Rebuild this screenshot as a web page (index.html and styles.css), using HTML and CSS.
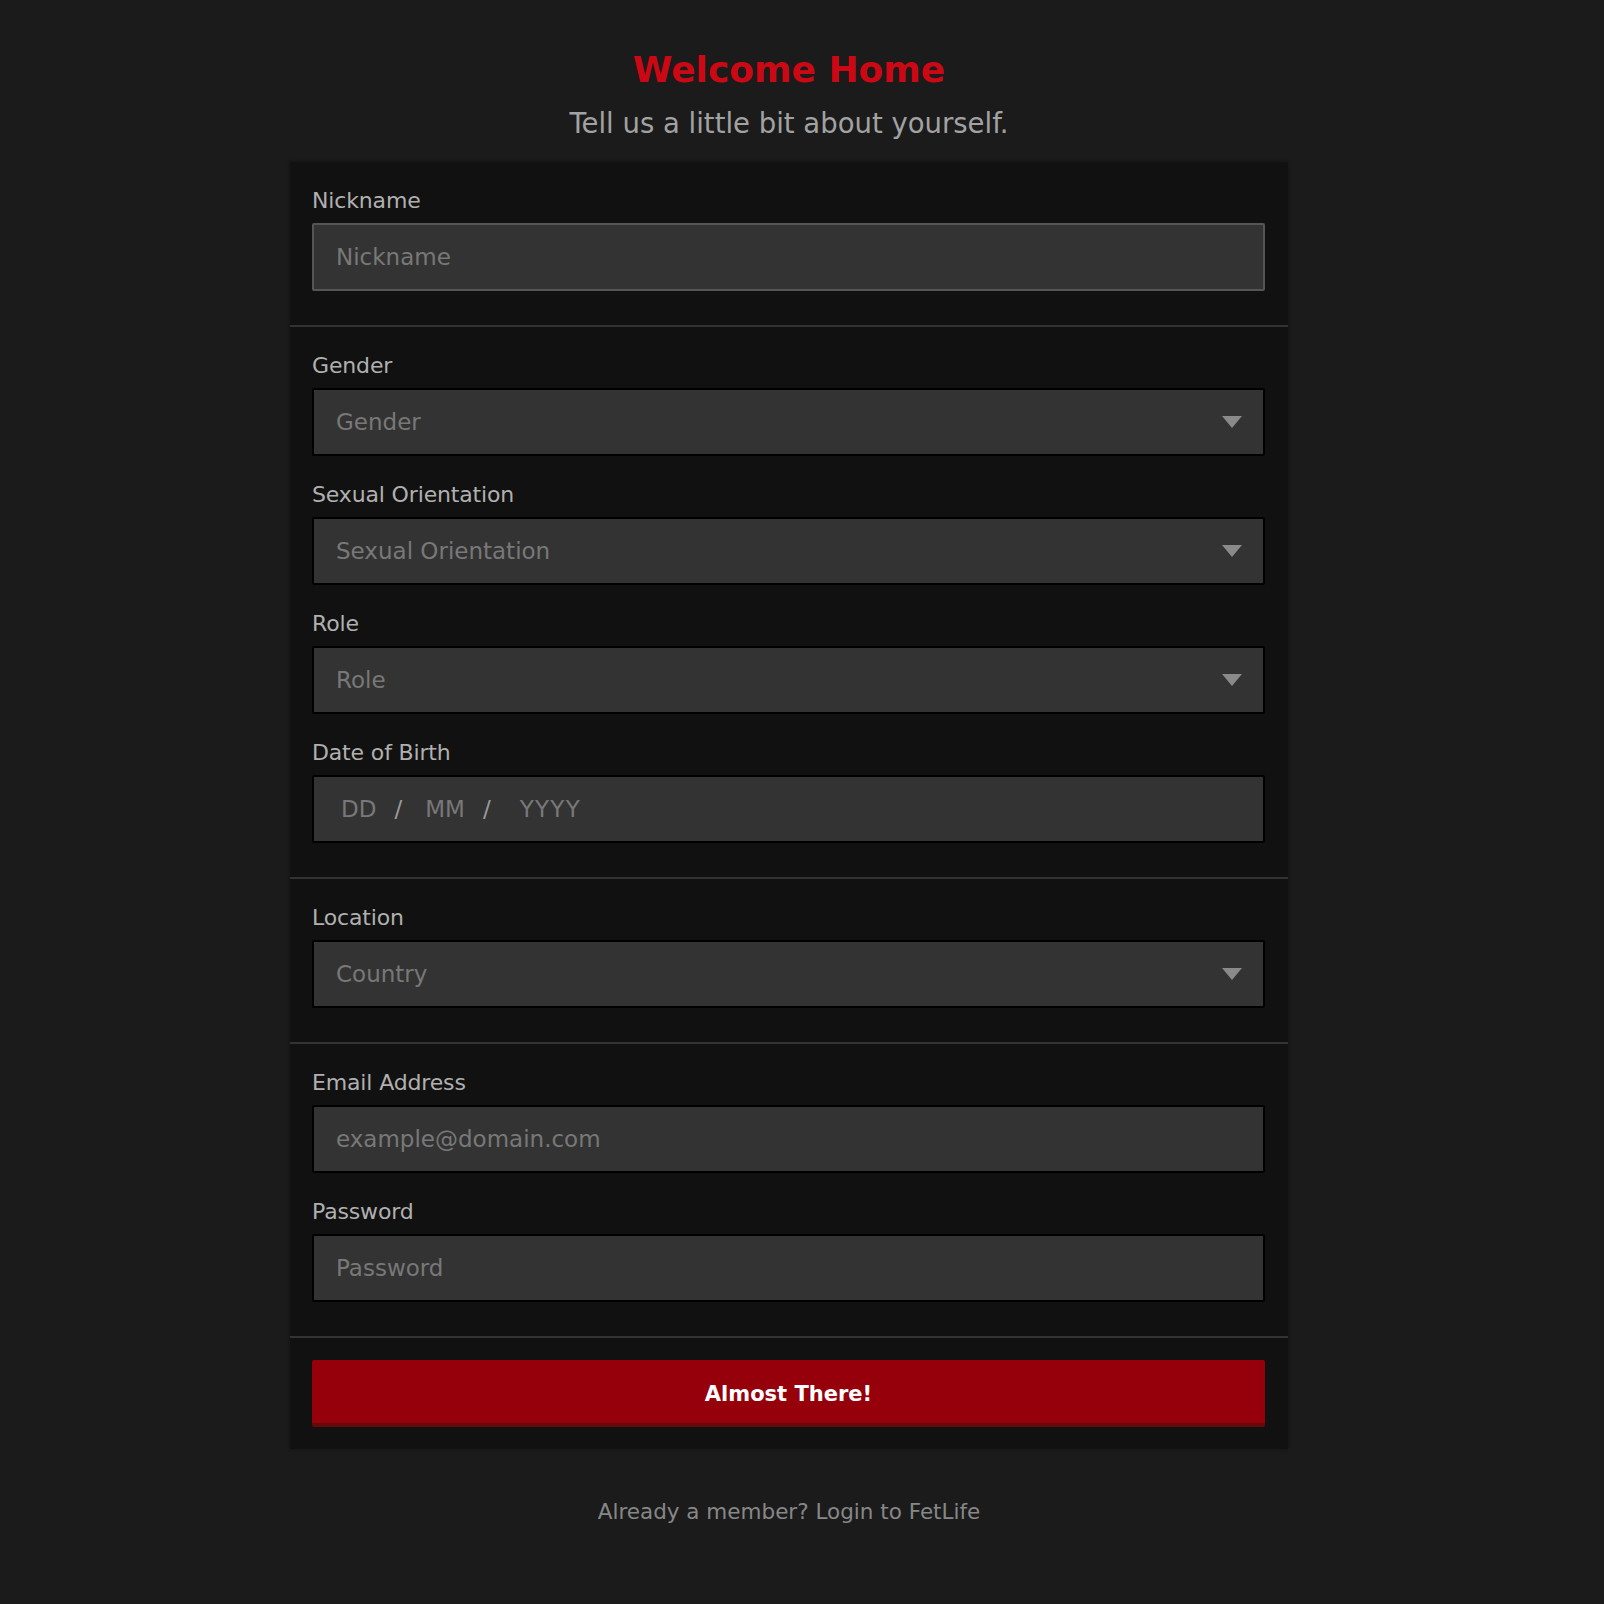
FILE: index.html
```html
<!DOCTYPE html>
<html lang="en">
<head>
<meta charset="utf-8">
<title>Welcome Home</title>
<link rel="stylesheet" href="styles.css">
</head>
<body>
<div class="page">
  <h1 class="title">Welcome Home</h1>
  <p class="subtitle">Tell us a little bit about yourself.</p>

  <form class="panel">
    <div class="section">
      <div class="field">
        <label class="label">Nickname</label>
        <input class="input input-active" type="text" placeholder="Nickname">
      </div>
    </div>

    <div class="section">
      <div class="field">
        <label class="label">Gender</label>
        <div class="input select"><span class="ph">Gender</span><svg class="caret" width="20" height="12" viewBox="0 0 20 12"><path d="M0 0H20L10 12Z" fill="#8a8a8a"/></svg></div>
      </div>
      <div class="field">
        <label class="label">Sexual Orientation</label>
        <div class="input select"><span class="ph">Sexual Orientation</span><svg class="caret" width="20" height="12" viewBox="0 0 20 12"><path d="M0 0H20L10 12Z" fill="#8a8a8a"/></svg></div>
      </div>
      <div class="field">
        <label class="label">Role</label>
        <div class="input select"><span class="ph">Role</span><svg class="caret" width="20" height="12" viewBox="0 0 20 12"><path d="M0 0H20L10 12Z" fill="#8a8a8a"/></svg></div>
      </div>
      <div class="field">
        <label class="label">Date of Birth</label>
        <div class="input dob"><span class="ph">DD</span><span class="sep">/</span><span class="ph">MM</span><span class="sep sep-last">/</span><span class="ph ph-year">YYYY</span></div>
      </div>
    </div>

    <div class="section">
      <div class="field">
        <label class="label">Location</label>
        <div class="input select"><span class="ph">Country</span><svg class="caret" width="20" height="12" viewBox="0 0 20 12"><path d="M0 0H20L10 12Z" fill="#8a8a8a"/></svg></div>
      </div>
    </div>

    <div class="section">
      <div class="field">
        <label class="label">Email Address</label>
        <input class="input" type="text" placeholder="example@domain.com">
      </div>
      <div class="field">
        <label class="label">Password</label>
        <input class="input" type="password" placeholder="Password">
      </div>
    </div>

    <div class="section section-button">
      <button class="button" type="button">Almost There!</button>
    </div>
  </form>

  <p class="footer">Already a member? Login to FetLife</p>
</div>
</body>
</html>
```

FILE: styles.css
```css
html, body {
  margin: 0;
  padding: 0;
  background: #1b1b1b;
}

body {
  font-family: "DejaVu Sans", "Noto Sans", sans-serif;
  color: #aaaaaa;
}

.page {
  width: 1578px;
  display: flex;
  flex-direction: column;
  align-items: center;
  padding-top: 48px;
  padding-bottom: 60px;
}

.title {
  margin: 0 0 14px;
  font-size: 36px;
  line-height: 44px;
  font-weight: bold;
  color: #cc0814;
}

.subtitle {
  margin: 0 0 22px;
  font-size: 27.5px;
  line-height: 34px;
  color: #a2a2a2;
}

.panel {
  width: 998px;
  background: #111111;
  box-shadow: 0 0 4px rgba(0, 0, 0, 0.35);
  display: flex;
  flex-direction: column;
}

.section {
  padding: 26px 23px 34px 22px;
  display: flex;
  flex-direction: column;
  gap: 26px;
}

.section + .section {
  border-top: 2px solid #333333;
}

.section-button {
  padding: 22px 23px 22px 22px;
}

.field {
  display: flex;
  flex-direction: column;
}

.label {
  font-size: 22px;
  line-height: 26px;
  letter-spacing: -0.15px;
  color: #b0b0b0;
  margin-bottom: 9px;
}

.input {
  box-sizing: border-box;
  height: 68px;
  width: 100%;
  margin: 0;
  background: #333333;
  border: 2px solid #000000;
  border-radius: 2px;
  padding: 0 22px;
  font-family: "DejaVu Sans", "Noto Sans", sans-serif;
  font-size: 23px;
  color: #cccccc;
  outline: none;
}

.input::placeholder {
  color: #787878;
  opacity: 1;
}

.input-active {
  border-color: #555555;
}

.select {
  display: flex;
  align-items: center;
  justify-content: space-between;
  padding-right: 21px;
}

.ph {
  color: #787878;
}

.ph-year {
  letter-spacing: 1.3px;
}

.caret {
  display: block;
}

.dob {
  display: flex;
  align-items: center;
  padding-left: 27px;
}

.sep {
  color: #9a9a9a;
  margin: 0 23px 0 18px;
}

.sep-last {
  margin-right: 29px;
}

.button {
  box-sizing: border-box;
  height: 67px;
  width: 100%;
  background: #96000b;
  border: none;
  border-bottom: 4px solid #650a0a;
  border-radius: 2px;
  padding: 4px 0 0;
  font-family: "DejaVu Sans", "Noto Sans", sans-serif;
  font-size: 21px;
  font-weight: bold;
  color: #ffffff;
}

.footer {
  margin: 50px 0 0;
  font-size: 21.5px;
  line-height: 26px;
  color: #878787;
}
```
